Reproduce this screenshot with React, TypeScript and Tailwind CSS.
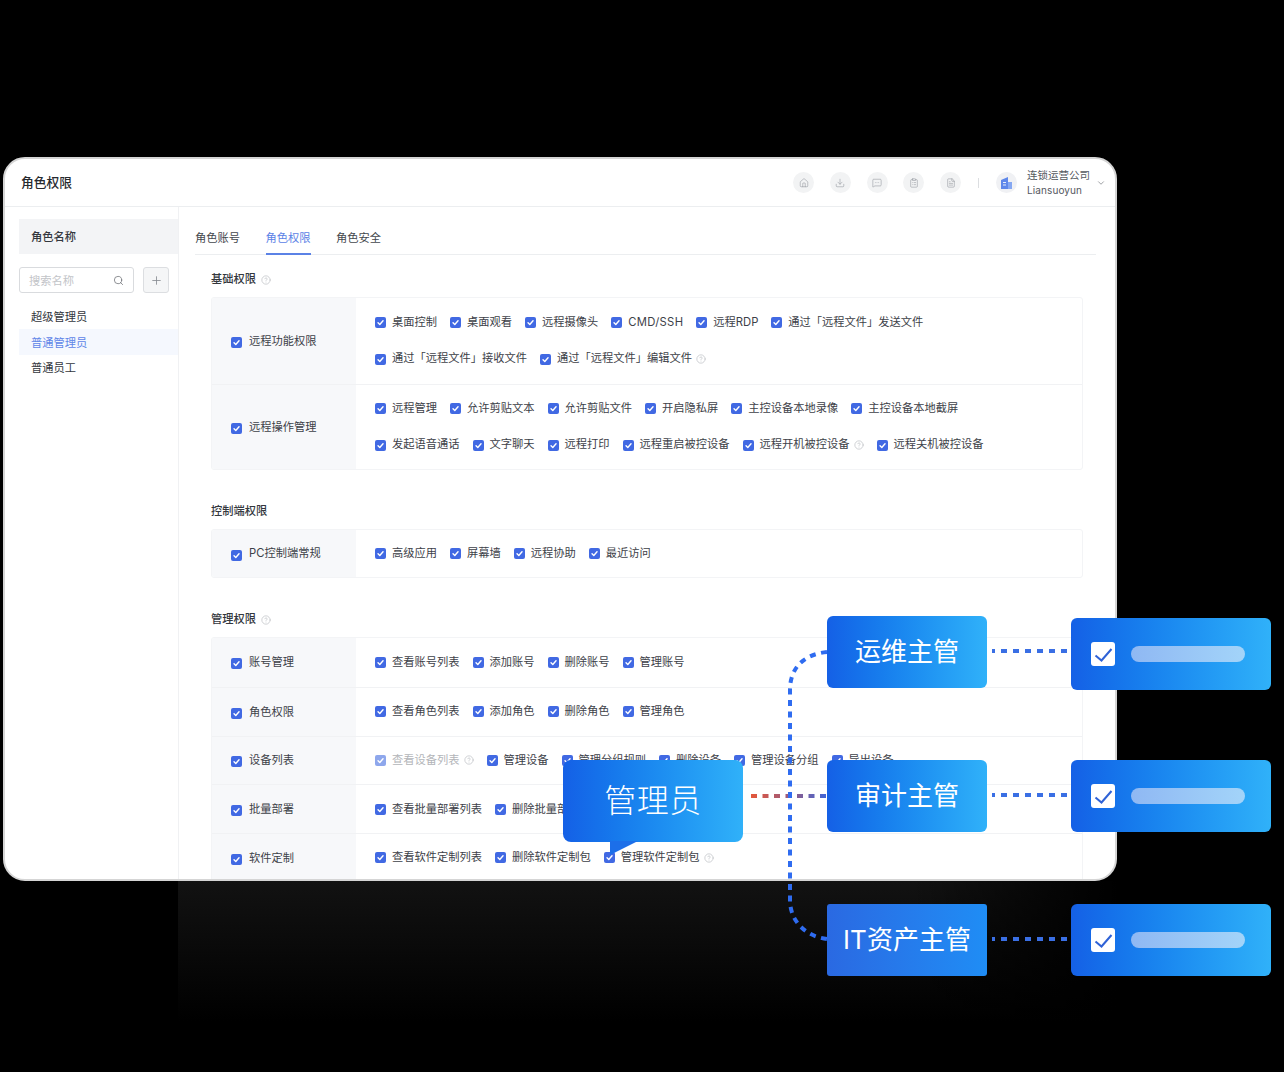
import { Home, Download, MessageSquareMore, ClipboardList, FileText, ChevronDown, Search, Plus, CircleHelp } from 'lucide-react';

type Perm = { label: string; help?: boolean; disabled?: boolean };
type Row = { name: string; lines: Perm[][] };

const p = (...labels: string[]): Perm[] => labels.map((label) => ({ label }));

const basicRows: Row[] = [
  {
    name: '远程功能权限',
    lines: [
      p('桌面控制', '桌面观看', '远程摄像头', 'CMD/SSH', '远程RDP', '通过「远程文件」发送文件'),
      [{ label: '通过「远程文件」接收文件' }, { label: '通过「远程文件」编辑文件', help: true }],
    ],
  },
  {
    name: '远程操作管理',
    lines: [
      p('远程管理', '允许剪贴文本', '允许剪贴文件', '开启隐私屏', '主控设备本地录像', '主控设备本地截屏'),
      [
        { label: '发起语音通话' },
        { label: '文字聊天' },
        { label: '远程打印' },
        { label: '远程重启被控设备' },
        { label: '远程开机被控设备', help: true },
        { label: '远程关机被控设备' },
      ],
    ],
  },
];

const clientRows: Row[] = [{ name: 'PC控制端常规', lines: [p('高级应用', '屏幕墙', '远程协助', '最近访问')] }];

const manageRows: Row[] = [
  { name: '账号管理', lines: [p('查看账号列表', '添加账号', '删除账号', '管理账号')] },
  { name: '角色权限', lines: [p('查看角色列表', '添加角色', '删除角色', '管理角色')] },
  {
    name: '设备列表',
    lines: [
      [
        { label: '查看设备列表', help: true, disabled: true },
        { label: '管理设备' },
        { label: '管理分组规则' },
        { label: '删除设备' },
        { label: '管理设备分组' },
        { label: '导出设备' },
      ],
    ],
  },
  { name: '批量部署', lines: [p('查看批量部署列表', '删除批量部署列表')] },
  {
    name: '软件定制',
    lines: [[{ label: '查看软件定制列表' }, { label: '删除软件定制包' }, { label: '管理软件定制包', help: true }]],
  },
];

function Check({ disabled }: { disabled?: boolean }) {
  return (
    <span className={`flex h-[11px] w-[11px] shrink-0 items-center justify-center rounded-[2px] ${disabled ? 'bg-[#8ea7ec]' : 'bg-[#4169e3]'}`}>
      <svg width="7" height="7" viewBox="0 0 10 10" fill="none">
        <path d="M1.5 5.4 4 7.8 8.6 2.6" stroke="#fff" strokeWidth="2" strokeLinecap="round" strokeLinejoin="round" />
      </svg>
    </span>
  );
}

function Help({ className = '' }: { className?: string }) {
  return <CircleHelp size={10} strokeWidth={1.5} className={`shrink-0 text-[#b6b9be] ${className}`} />;
}

function PermTable({ rows, rowHeight }: { rows: Row[]; rowHeight: string }) {
  return (
    <div className="w-[872px] overflow-hidden rounded-[3px] border border-[#f3f4f6]">
      {rows.map((row, i) => (
        <div key={row.name} className={`flex ${rowHeight} ${i > 0 ? 'border-t border-[#f1f2f4]' : ''}`}>
          <div className="flex w-[144px] shrink-0 items-center gap-[7px] bg-[#f7f8fa] pl-[19px] text-[#3d4148]">
            <span className="mt-[3px]"><Check /></span>
            <span className="pt-[1px]">{row.name}</span>
          </div>
          <div className="flex flex-1 flex-col justify-center pl-[19px]">
            {row.lines.map((line, j) => (
              <div key={j} className="flex h-[36.5px] items-center gap-x-[13px]">
                {line.map((item) => (
                  <div key={item.label} className="flex items-center gap-[6px]">
                    <Check disabled={item.disabled} />
                    <span className={`${item.disabled ? 'text-[#b3b5b9]' : 'text-[#3d4148]'} ${item.label === 'CMD/SSH' ? 'tracking-[0.3px]' : ''}`}>{item.label}</span>
                    {item.help && <Help className="-ml-[2px]" />}
                  </div>
                ))}
              </div>
            ))}
          </div>
        </div>
      ))}
    </div>
  );
}

function Section({ title, help, className = '', children }: { title: string; help?: boolean; className?: string; children: React.ReactNode }) {
  return (
    <section className={className}>
      <div className="mb-[9px] flex h-[18px] items-center gap-[5px] pt-[2px] font-medium text-[#33373d]">
        {title}
        {help && <Help />}
      </div>
      {children}
    </section>
  );
}

function RoundIcon({ children }: { children: React.ReactNode }) {
  return <div className="flex h-[21px] w-[21px] items-center justify-center rounded-full bg-[#f2f3f4] text-[#8b8f96]">{children}</div>;
}

function Connectors() {
  return (
    <svg className="pointer-events-none absolute left-0 top-0" width="1284" height="1072" fill="none">
      <defs>
        <linearGradient id="redline" gradientUnits="userSpaceOnUse" x1="751" y1="0" x2="827" y2="0">
          <stop offset="0" stopColor="#e4573a" />
          <stop offset="0.45" stopColor="#a25b78" />
          <stop offset="1" stopColor="#3f66d8" />
        </linearGradient>
      </defs>
      <path d="M751 796H827" stroke="url(#redline)" strokeWidth="4" strokeDasharray="6 5.5" />
      <path d="M827 652C806 654 790 666 790 690V900C790 920 804 936 827 939" stroke="#2f6cf0" strokeWidth="4" strokeDasharray="6 5.5" />
      <path d="M992 651H1071M992 795H1071M992 939H1071" stroke="#3a6fe4" strokeWidth="4" strokeDasharray="6 6" strokeDashoffset="3" />
    </svg>
  );
}

function RoleCard({ label, top, dim }: { label: string; top: string; dim?: boolean }) {
  return (
    <div className={`absolute left-[827px] flex h-[72px] w-[160px] items-center justify-center text-[26px] text-white ${top} ${dim ? 'rounded-[3px] bg-gradient-to-r from-[#2a69e2] to-[#1f8df5]' : 'rounded-[6px] bg-gradient-to-r from-[#1560e6] to-[#30b1f9]'}`}>
      {label}
    </div>
  );
}

function CheckCard({ top }: { top: string }) {
  return (
    <div className={`absolute left-[1071px] flex h-[72px] w-[200px] items-center gap-4 rounded-[6px] bg-gradient-to-r from-[#1560e6] to-[#30b1f9] pl-5 ${top}`}>
      <span className="flex h-6 w-6 items-center justify-center rounded-[3px] bg-white">
        <svg width="24" height="24" viewBox="0 0 24 24" fill="none">
          <path d="M4.5 13.5 10.5 18.5 20.5 7" stroke="#2f62d6" strokeWidth="2" />
        </svg>
      </span>
      <span className="h-4 w-[114px] rounded-full bg-gradient-to-r from-[#8fb8f3] to-[#a3d4f9]" />
    </div>
  );
}

export default function App() {
  return (
    <div className="relative h-[1072px] w-[1284px] overflow-hidden bg-black pl-[3px] pt-[157px] font-[Inter,'Noto_Sans_CJK_SC',sans-serif] text-[11.25px] leading-none">
      {/* main window */}
      <div className="flex h-[724px] w-[1114px] flex-col overflow-hidden rounded-[22px] border-2 border-[#d5d5d5] bg-white">
        <header className="flex h-[48px] shrink-0 items-center border-b border-[#eceef0] pl-[16px] pr-[9px]">
          <div className="pt-[1px] text-[12.75px] font-medium text-[#26292e]">角色权限</div>
          <div className="ml-auto flex items-center gap-[15.7px]">
            <RoundIcon><Home size={10} strokeWidth={1.25} /></RoundIcon>
            <RoundIcon><Download size={10} strokeWidth={1.25} /></RoundIcon>
            <RoundIcon><MessageSquareMore size={10} strokeWidth={1.25} /></RoundIcon>
            <RoundIcon><ClipboardList size={10} strokeWidth={1.25} /></RoundIcon>
            <RoundIcon><FileText size={10} strokeWidth={1.25} /></RoundIcon>
          </div>
          <div className="ml-[17px] h-[10px] w-px bg-[#dcdee1]" />
          <div className="ml-[17px] flex h-[21px] w-[21px] items-center justify-center rounded-full bg-[#f0f1f4]">
            <svg width="11" height="12" viewBox="0 0 11 12">
              <path d="M0 3 7 0V12H0Z" fill="#5f88ea" />
              <path d="M7 5H11V12H7Z" fill="#86a8f2" />
              <path d="M2 5H5V6H2ZM2 7.5H5V8.5H2Z" fill="#e6edfc" />
            </svg>
          </div>
          <div className="ml-[10px] flex w-[64px] flex-col gap-[4px] pt-[1px] text-[10.5px] text-[#55595f]">
            <span>连锁运营公司</span>
            <span className="text-[10px] tracking-[0.1px]">Liansuoyun</span>
          </div>
          <ChevronDown size={10} strokeWidth={1.5} className="ml-[5px] text-[#666a70]" />
        </header>

        <div className="flex min-h-0 flex-1">
          {/* role list */}
          <aside className="w-[174px] shrink-0 border-r border-[#f0f1f3] pl-[14px] pt-[12px]">
            <div className="flex h-[35px] items-center bg-[#f3f4f6] pl-3 pt-[2px] font-medium text-[#33373d]">角色名称</div>
            <div className="mt-[13px] flex gap-[9px]">
              <div className="flex h-[26px] w-[115px] items-center justify-between rounded-[3px] border border-[#d9dbde] px-[9px] text-[#c2c4c8]">
                <span className="pt-[3px]">搜索名称</span>
                <Search size={11} strokeWidth={1.5} className="text-[#5e6268]" />
              </div>
              <div className="flex h-[26px] w-[26px] items-center justify-center rounded-[3px] border border-[#dcdee1] bg-[#f5f6f7] text-[#85898f]">
                <Plus size={13} strokeWidth={1.5} />
              </div>
            </div>
            <div className="mt-[10px]">
              <div className="flex h-[26px] items-center pl-3 pt-[3px] text-[#33373d]">超级管理员</div>
              <div className="flex h-[25.5px] items-center bg-[#f5f8fe] pl-3 pt-[3px] text-[#5f86e8]">普通管理员</div>
              <div className="flex h-[25.5px] items-center pl-3 pt-[2px] text-[#33373d]">普通员工</div>
            </div>
          </aside>

          <main className="min-w-0 flex-1 pl-[16px] pr-[19px] pt-[12px]">
            <nav className="flex h-[36px] gap-[25.5px] border-b border-[#eceef0] text-[#43474d]">
              <div className="flex h-[36px] items-center pt-[4px]">角色账号</div>
              <div className="flex h-[36px] items-center border-b-2 border-[#5b82e6] pt-[6px] text-[#5b82e6]">角色权限</div>
              <div className="flex h-[36px] items-center pt-[4px]">角色安全</div>
            </nav>
            <div className="pl-[16px] pt-[15px]">
              <Section title="基础权限" help>
                <PermTable rows={basicRows} rowHeight="h-[85.5px]" />
              </Section>
              <Section title="控制端权限" className="mt-[32px]">
                <PermTable rows={clientRows} rowHeight="h-[47px]" />
              </Section>
              <Section title="管理权限" help className="mt-[32px]">
                <PermTable rows={manageRows} rowHeight="h-[48.75px]" />
              </Section>
            </div>
          </main>
        </div>
      </div>

      {/* faint reflection under the window */}
      <div className="ml-[175px] h-[140px] w-[940px] bg-[linear-gradient(to_right,transparent_78%,black),linear-gradient(to_bottom,#121212,black)]" />

      <Connectors />

      {/* overlay cards */}
      <div className="absolute left-[563px] top-[760px] flex h-[82px] w-[180px] items-center justify-center rounded-[8px] bg-gradient-to-r from-[#1560e6] to-[#30b1f9] text-[32px] font-light tracking-[0.5px] text-white">
        管理员
        <svg className="absolute left-[46px] top-[81px]" width="30" height="15" viewBox="0 0 30 15">
          <path d="M1 0H29L1 14Z" fill="#1c6fe9" />
        </svg>
      </div>

      <RoleCard label="运维主管" top="top-[616px]" />
      <RoleCard label="审计主管" top="top-[760px]" />
      <RoleCard label="IT资产主管" top="top-[904px]" dim />

      <CheckCard top="top-[618px]" />
      <CheckCard top="top-[760px]" />
      <CheckCard top="top-[904px]" />
    </div>
  );
}
